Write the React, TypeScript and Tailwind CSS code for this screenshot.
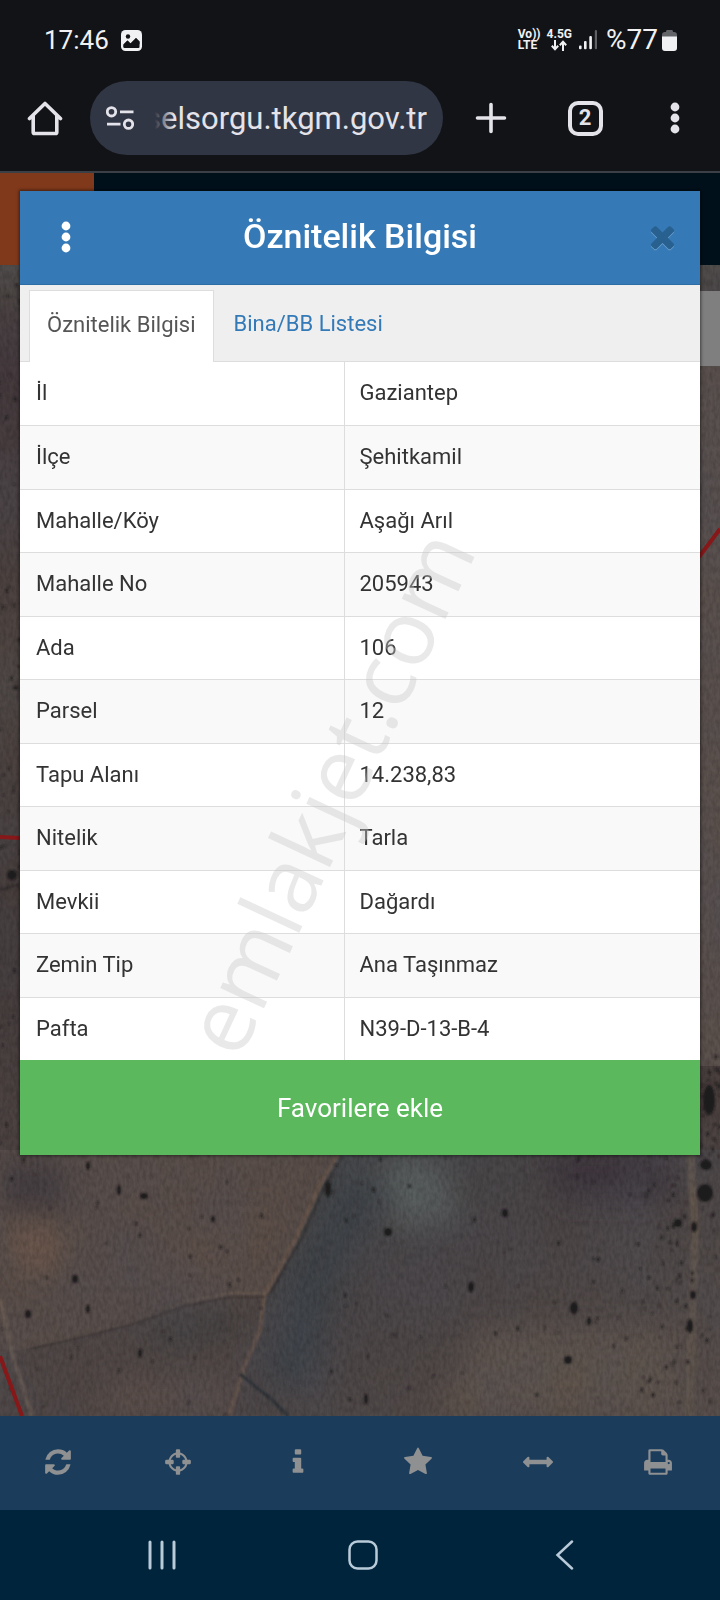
import React from 'react';

interface IconProps {
  path: string;
  className?: string;
}

const ICONS = {
  refresh:
    'M1639 1056q0 5-1 7-64 268-268 434.5t-478 166.5q-146 0-282.5-55t-243.5-157l-129 129q-19 19-45 19t-45-19-19-45v-448q0-26 19-45t45-19h448q26 0 45 19t19 45-19 45l-137 137q71 66 161 102t187 36q134 0 250-65t186-179q11-17 53-117 8-23 30-23h192q13 0 22.5 9.5t9.5 22.5zm25-800v448q0 26-19 45t-45 19h-448q-26 0-45-19t-19-45 19-45l138-138q-148-137-349-137-134 0-250 65t-186 179q-11 17-53 117-8 23-30 23h-199q-13 0-22.5-9.5t-9.5-22.5v-7q65-268 270-434.5t480-166.5q146 0 284 55.5t245 156.5l130-129q19-19 45-19t45 19 19 45z',
  crosshairs:
    'M1325 1024h-109q-26 0-45-19t-19-45v-128q0-26 19-45t45-19h109q-32-108-112.5-188.5t-188.5-112.5v109q0 26-19 45t-45 19h-128q-26 0-45-19t-19-45v-109q-108 32-188.5 112.5t-112.5 188.5h109q26 0 45 19t19 45v128q0 26-19 45t-45 19h-109q32 108 112.5 188.5t188.5 112.5v-109q0-26 19-45t45-19h128q26 0 45 19t19 45v109q108-32 188.5-112.5t112.5-188.5zm339-192v128q0 26-19 45t-45 19h-143q-37 161-154.5 278.5t-278.5 154.5v143q0 26-19 45t-45 19h-128q-26 0-45-19t-19-45v-143q-161-37-278.5-154.5t-154.5-278.5h-143q-26 0-45-19t-19-45v-128q0-26 19-45t45-19h143q37-161 154.5-278.5t278.5-154.5v-143q0-26 19-45t45-19h128q26 0 45 19t19 45v143q161 37 278.5 154.5t154.5 278.5h143q26 0 45 19t19 45z',
  info:
    'M1216 1344v128q0 26-19 45t-45 19h-512q-26 0-45-19t-19-45v-128q0-26 19-45t45-19h64v-384h-64q-26 0-45-19t-19-45v-128q0-26 19-45t45-19h384q26 0 45 19t19 45v576h64q26 0 45 19t19 45zm-128-1152v192q0 26-19 45t-45 19h-256q-26 0-45-19t-19-45v-192q0-26 19-45t45-19h256q26 0 45 19t19 45z',
  star:
    'M1728 647q0 22-26 48l-363 354 86 500q1 7 1 20 0 21-10.5 35.5t-30.5 14.5q-19 0-40-12l-449-236-449 236q-22 12-40 12-21 0-31.5-14.5t-10.5-35.5q0-6 2-20l86-500-364-354q-25-27-25-48 0-37 56-46l502-73 225-455q19-41 49-41t49 41l225 455 502 73q56 9 56 46z',
  arrows:
    'M1792 896q0 26-19 45l-256 256q-19 19-45 19t-45-19-19-45v-128h-1024v128q0 26-19 45t-45 19-45-19l-256-256q-19-19-19-45t19-45l256-256q19-19 45-19t45 19 19 45v128h1024v-128q0-26 19-45t45-19 45 19l256 256q19 19 19 45z',
  print:
    'M448 1536h896v-256h-896v256zm0-640h896v-384h-160q-40 0-68-28t-28-68v-160h-640v640zm1152 64q0-26-19-45t-45-19-45 19-19 45 19 45 45 19 45-19 19-45zm128 0v416q0 13-9.5 22.5t-22.5 9.5h-224v160q0 40-28 68t-68 28h-960q-40 0-68-28t-28-68v-160h-224q-13 0-22.5-9.5t-9.5-22.5v-416q0-79 56.5-135.5t135.5-56.5h64v-544q0-40 28-68t68-28h672q40 0 88 20t76 48l152 152q28 28 48 76t20 88v256h64q79 0 135.5 56.5t56.5 135.5z',
  times:
    'M1490 1322q0 40-28 68l-136 136q-28 28-68 28t-68-28l-294-294-294 294q-28 28-68 28t-68-28l-136-136q-28-28-28-68t28-68l294-294-294-294q-28-28-28-68t28-68l136-136q28-28 68-28t68 28l294 294 294-294q28-28 68-28t68 28l136 136q28 28 28 68t-28 68l-294 294 294 294q28 28 28 68z',
};

const Icon = ({ path, className = '' }: IconProps) => (
  <svg viewBox="0 0 1792 1792" fill="currentColor" className={className} aria-hidden="true">
    <path d={path} />
  </svg>
);

const Dots = ({ className = '' }: { className?: string }) => (
  <svg viewBox="0 0 10 32" fill="currentColor" className={className} aria-hidden="true">
    <circle cx="5" cy="5" r="4.4" />
    <circle cx="5" cy="16" r="4.4" />
    <circle cx="5" cy="27" r="4.4" />
  </svg>
);

const StatusBar = () => (
  <div className="flex h-20 items-center justify-between pl-11 pr-[43px] text-[#f1f1f3]">
    <div className="flex items-center gap-3">
      <span className="text-[26px] leading-8">17:46</span>
      <svg viewBox="0 0 21 21" className="size-[21px]" aria-hidden="true">
        <rect width="21" height="21" rx="4.5" fill="currentColor" />
        <circle cx="7" cy="6.5" r="2.2" fill="#121316" />
        <path d="M2.500 14.500 6.500 10.500l3 3 5.500-5.500 3.500 3.500v3l-3.500-3.500-5.500 6-3-3-4 3.500Z" fill="#121316" />
        <path d="M2.500 14.500 6.500 10.500l3 3 5.500-5.500 3.500 3.500V17q0 1-1 1h-14q-1 0-1-1Z" fill="#121316" />
      </svg>
    </div>
    <div className="flex items-center">
      <div className="text-[12px] font-bold leading-[11px]">
        <div>Vo))</div>
        <div>LTE</div>
      </div>
      <div className="ml-1.5 flex flex-col items-center text-[12px] font-bold leading-[11px]">
        <span>4.5G</span>
        <svg viewBox="0 0 16 11" className="h-[11px] w-4" fill="none" stroke="currentColor" strokeWidth="2" aria-hidden="true">
          <path d="M4 0v9M.8 5.800 4 9.200l3.200-3.400M12 11V2M8.800 5.200 12 1.800l3.200 3.400" />
        </svg>
      </div>
      <svg viewBox="0 0 20 20" className="ml-1.5 size-5" fill="currentColor" aria-hidden="true">
        <rect x="1" y="15.500" width="2.600" height="3.800" rx="1" />
        <rect x="6" y="11" width="2.600" height="8.300" rx="1" />
        <rect x="11.300" y="6" width="2.600" height="13.300" rx="1" />
        <rect x="16.800" y="0" width="2.200" height="19.300" rx="1" opacity=".35" />
      </svg>
      <span className="ml-2 text-[28px] leading-8">%77</span>
      <svg viewBox="0 0 15 21" className="ml-1 h-[21px] w-[15px]" aria-hidden="true">
        <path d="M5 0h5q1 0 1 2h1q3 0 3 3v2H0V5q0-3 3-3h1q0-2 1-2Z" fill="#636467" />
        <path d="M0 6.500h15V18q0 3-3 3H3q-3 0-3-3Z" fill="#f1f1f3" />
      </svg>
    </div>
  </div>
);

const BrowserBar = () => (
  <div className="flex h-[93px] items-start border-b-2 border-[#3b3f46] pt-px text-[#e4e3ea]">
    <button type="button" aria-label="Home" className="flex h-[74px] w-[90px] items-center justify-center">
      <svg viewBox="0 0 36 36" className="size-9" fill="none" stroke="currentColor" strokeWidth="3.600" strokeLinejoin="round" strokeLinecap="round" aria-hidden="true">
        <path d="M2.500 18.500 18 3.500l15.500 15M6.200 16v16.200q0 1.300 1.300 1.300h21q1.300 0 1.300-1.300V16" />
      </svg>
    </button>
    <div className="flex h-[74px] min-w-0 flex-1 items-center rounded-full bg-[#313645] pl-4 pr-4">
      <svg viewBox="0 0 28 24" className="h-6 w-7 shrink-0" fill="none" stroke="currentColor" strokeWidth="2.800" aria-hidden="true">
        <circle cx="5.500" cy="5.800" r="4.200" />
        <path d="M14 5.800h13.500M1 18.200h13.500" />
        <circle cx="22.500" cy="18.200" r="4.200" />
      </svg>
      <div className="relative ml-4 flex min-w-0 flex-1 justify-end overflow-hidden pt-0.5">
        <span className="whitespace-nowrap text-[31px] leading-10">selsorgu.tkgm.gov.tr</span>
        <div className="absolute inset-y-0 left-0 w-6 bg-linear-to-r from-[#313645] from-20% to-transparent" />
      </div>
    </div>
    <div className="flex h-[74px] w-[277px] items-center">
      <button type="button" aria-label="New tab" className="flex w-24 justify-center">
        <svg viewBox="0 0 32 32" className="size-8" stroke="currentColor" strokeWidth="3.600" strokeLinecap="round" aria-hidden="true">
          <path d="M16 2.500v27M2.500 16h27" />
        </svg>
      </button>
      <button type="button" aria-label="Tabs" className="flex w-[92px] justify-center">
        <span className="flex size-[35px] items-center justify-center rounded-[10px] border-4 border-[#e4e3ea] text-[22px] font-bold leading-6">
          2
        </span>
      </button>
      <button type="button" aria-label="Menu" className="flex w-[88px] justify-center">
        <Dots className="h-8 w-2.5" />
      </button>
    </div>
  </div>
);

// small repeatable generator so the shrubs always land on the same places
const shrubs = (count: number, seed: number, x: number, y: number, w: number, h: number) => {
  let s = seed;
  const next = () => {
    s = (s * 16807) % 2147483647;
    return s / 2147483647;
  };
  return Array.from({ length: count }, () => ({
    cx: x + next() * w,
    cy: y + next() * h,
    rx: 0.6 + next() * 1.2,
    ry: 0.8 + next() * 1.8,
  }));
};

const SHRUBS = [
  ...shrubs(40, 77, 0, 270, 20, 880),
  ...shrubs(24, 912, 0, 1156, 270, 180),
  ...shrubs(12, 431, 10, 1330, 230, 85),
  ...shrubs(60, 5501, 330, 1156, 350, 255),
  ...shrubs(65, 642, 640, 1150, 80, 266),
  ...shrubs(30, 99, 698, 1050, 22, 110),
];

const BIG_SHRUBS = [
  [88, 1166, 2, 4], [144, 1196, 4, 3], [119, 1190, 2, 5], [213, 1219, 2, 3],
  [75, 1279, 3, 4], [28, 1314, 3, 4], [88, 1309, 2, 4], [140, 1353, 2, 4],
  [328, 1189, 3, 8], [388, 1232, 4, 4], [505, 1213, 3, 4], [471, 1287, 3, 5],
  [574, 1308, 4, 6], [589, 1321, 2, 4], [568, 1360, 4, 4], [366, 1399, 2, 5],
  [690, 1326, 3, 7], [678, 1223, 4, 4], [705, 1193, 8, 9], [709, 1100, 6, 15],
  [706, 1165, 6, 5], [694, 1227, 3, 5], [693, 1295, 3, 4], [12, 875, 5, 5],
];

const MapCanvas = () => (
  <svg
    viewBox="0 265 720 1151"
    preserveAspectRatio="none"
    className="absolute inset-x-0 bottom-0 top-[92px] h-[calc(100%-92px)] w-full"
    aria-hidden="true"
  >
    <defs>
      <linearGradient id="soil" x1="0" y1="0" x2="0" y2="1">
        <stop offset="0" stopColor="#504c49" />
        <stop offset=".08" stopColor="#43373a" />
        <stop offset=".35" stopColor="#4f4642" />
        <stop offset=".6" stopColor="#443b3a" />
        <stop offset="1" stopColor="#584c48" />
      </linearGradient>
      <linearGradient id="east" x1="0" y1="0" x2="1" y2="1">
        <stop offset="0" stopColor="#454a4d" />
        <stop offset=".45" stopColor="#4b4546" />
        <stop offset="1" stopColor="#5a4f49" />
      </linearGradient>
      <filter id="blur" x="-50%" y="-50%" width="200%" height="200%">
        <feGaussianBlur stdDeviation="14" />
      </filter>
      <filter id="soft">
        <feGaussianBlur stdDeviation="1" />
      </filter>
      <filter id="patches" x="0" y="0" width="100%" height="100%">
        <feTurbulence type="fractalNoise" baseFrequency=".012 .009" numOctaves="5" seed="8" />
        <feColorMatrix values="0 0 0 0 .08  0 0 0 0 .08  0 0 0 0 .1  1.200 0 0 0 -.4" />
      </filter>
      <filter id="grain" x="0" y="0" width="100%" height="100%">
        <feTurbulence type="fractalNoise" baseFrequency=".3 .15" numOctaves="2" seed="3" />
        <feColorMatrix values="0 0 0 0 0  0 0 0 0 0  0 0 0 0 0  .6 0 0 0 -.2" />
      </filter>
    </defs>
    <rect y="265" width="720" height="1151" fill="url(#soil)" />
    <rect x="690" y="366" width="30" height="700" fill="#5b514d" />
    <path d="M0 1150h345l-20 32-25 55-35 62-35-2-45 9-55 19-60 15-70 14Z" fill="#5a4e49" />
    <path d="M0 1354l70-14 60-15 55-19 45-9h35l-3 33-17 40-13 46H0Z" fill="#504745" />
    <path d="M342 1150h378v266H232l13-46 17-40 3-33 35-62 25-55Z" fill="url(#east)" />
    <g filter="url(#blur)">
      <path d="M340 1180 285 1290l-20 90 50 10 20-110 60-100Z" fill="#3e4346" />
      <path d="M380 1160h60l20 60-60 10Z" fill="#5a5e5e" />
      <path d="M540 1150h130v50H560Z" fill="#3d363b" />
      <path d="M0 1160h60l10 50H0Z" fill="#443e40" />
      <path d="M5 1230h55v30l-30 15Z" fill="#6e594e" />
      <path d="M150 1240l120-30-15 60-60 20Z" fill="#5f4f47" />
      <path d="M150 1322l90-12v25l-90 10Z" fill="#434041" />
      <path d="M110 1380h120v36H90Z" fill="#5c504b" />
      <path d="M480 1330h200v86H440Z" fill="#60544e" />
    </g>
    <g fill="none" filter="url(#soft)">
      <path d="M338 1154l-18 30-24 54-32 58-4 34-17 40-14 46" stroke="#66554c" strokeWidth="4" />
      <path d="M343 1156l-17 28-24 54-32 56" stroke="#383334" strokeWidth="2" />
      <path d="M265 1297h-35l-45 9-55 19-60 15-40 9" stroke="#3f3836" strokeWidth="2" />
      <path d="M265 1293h-35l-47 9" stroke="#695a4f" strokeWidth="2" />
      <path d="M240 1374l30 24 18 18" stroke="#2b3036" strokeWidth="3" />
      <path d="M690 1150l5 80-6 186" stroke="#62564e" strokeWidth="8" />
      <path d="M0 1300l14 60 18 56" stroke="#6b5b53" strokeWidth="4" />
      <path d="M0 890l20-6" stroke="#2d2a2b" strokeWidth="2" />
    </g>
    <rect y="265" width="720" height="1151" filter="url(#patches)" opacity=".6" />
    <rect y="265" width="720" height="1151" filter="url(#grain)" opacity=".5" />
    <g fill="#1d1a1c" filter="url(#soft)">
      {SHRUBS.map((s, i) => (
        <ellipse key={i} {...s} opacity=".8" />
      ))}
      {BIG_SHRUBS.map(([cx, cy, rx, ry], i) => (
        <ellipse key={i} cx={cx} cy={cy} rx={rx} ry={ry} />
      ))}
    </g>
    <g fill="none" stroke="#86181a" strokeWidth="4">
      <path d="M0 1356l22 60" />
      <path d="M0 837l20 1" />
      <path d="M699 557l21-28" />
    </g>
  </svg>
);

const ROWS = [
  ['İl', 'Gaziantep'],
  ['İlçe', 'Şehitkamil'],
  ['Mahalle/Köy', 'Aşağı Arıl'],
  ['Mahalle No', '205943'],
  ['Ada', '106'],
  ['Parsel', '12'],
  ['Tapu Alanı', '14.238,83'],
  ['Nitelik', 'Tarla'],
  ['Mevkii', 'Dağardı'],
  ['Zemin Tip', 'Ana Taşınmaz'],
  ['Pafta', 'N39-D-13-B-4'],
];

const AttributeDialog = () => (
  <section
    role="dialog"
    aria-labelledby="dialog-title"
    className="relative mx-5 bg-white shadow-[0_0_3px_1px_rgba(0,0,0,0.5)]"
  >
    <header className="flex h-[94px] items-center justify-between border-b border-[#2e6da4] bg-[#357ab7] pb-0.5 text-white">
      <button type="button" aria-label="Menü" className="flex w-[91px] justify-center">
        <Dots className="h-8 w-2.5" />
      </button>
      <h1 id="dialog-title" className="pb-0.5 text-[34px] font-medium leading-10">
        Öznitelik Bilgisi
      </h1>
      <button type="button" aria-label="Kapat" className="flex w-[91px] justify-end pr-5">
        <Icon path={ICONS.times} className="size-[35px] text-[#28608f] drop-shadow-[0_1px_0_#6d9fcb]" />
      </button>
    </header>

    <nav className="flex h-[77px] items-end border-b border-[#ddd] bg-[#efefef] pl-[9px] text-[22px] leading-8">
      <a href="#oznitelik" className="-mb-px flex h-[72px] items-center border border-b-0 border-[#ddd] bg-white px-[17px] pb-1 text-[#555]">
        Öznitelik Bilgisi
      </a>
      <a href="#bina" className="flex h-[71px] items-center px-5 pb-1 text-[#337ab7]">
        Bina/BB Listesi
      </a>
    </nav>

    <table className="w-full table-fixed border-collapse text-left text-[22px] leading-8 text-[#333]">
      <tbody>
        {ROWS.map(([label, value]) => (
          <tr key={label} className="border-b border-[#ddd] last:border-b-0 odd:h-[63px] even:h-16 even:bg-[#f9f9f9]">
            <th scope="row" className="w-[324px] border-r border-[#ddd] py-0 pl-4 font-normal">
              {label}
            </th>
            <td className="py-0 pl-[15px]">{value}</td>
          </tr>
        ))}
      </tbody>
    </table>

    <button type="button" className="block h-[95px] w-full bg-[#5cb85c] text-[26px] leading-8 text-white">
      Favorilere ekle
    </button>

    <div className="pointer-events-none absolute inset-x-0 bottom-0 top-[236px] flex items-center justify-center pr-[66px]">
      <span className="-rotate-65 whitespace-nowrap font-['Open_Sans','Noto_Sans',sans-serif] text-[90px] leading-none text-[#c8c8c8]/40">
        emlakjet.com
      </span>
    </div>
  </section>
);

const TOOLS = [
  { label: 'Yenile', path: ICONS.refresh },
  { label: 'Konum', path: ICONS.crosshairs },
  { label: 'Bilgi', path: ICONS.info },
  { label: 'Favoriler', path: ICONS.star },
  { label: 'Ölçüm', path: ICONS.arrows },
  { label: 'Yazdır', path: ICONS.print },
];

const ToolBar = () => (
  <div className="grid h-[94px] grid-cols-6 bg-[#1b3d5b] text-[#8f9092]">
    {TOOLS.map(({ label, path }) => (
      <button key={label} type="button" aria-label={label} className="flex items-center justify-center pb-0.5 pr-1">
        <Icon path={path} className="size-[30px]" />
      </button>
    ))}
  </div>
);

const SystemNav = () => (
  <div className="grid h-[90px] grid-cols-3 bg-[#00243b] pl-[61px] pr-14 text-[#b9cad9]">
    <button type="button" aria-label="Recents" className="flex items-center justify-center">
      <svg viewBox="0 0 30 30" className="size-[30px]" stroke="currentColor" strokeWidth="3" strokeLinecap="round" aria-hidden="true">
        <path d="M3 2v26M15 2v26M27 2v26" />
      </svg>
    </button>
    <button type="button" aria-label="Home" className="flex items-center justify-center">
      <svg viewBox="0 0 30 30" className="size-[30px]" fill="none" stroke="currentColor" strokeWidth="2.500" aria-hidden="true">
        <rect x="1.500" y="1.500" width="27" height="27" rx="8" />
      </svg>
    </button>
    <button type="button" aria-label="Back" className="flex items-center justify-center">
      <svg viewBox="0 0 30 30" className="size-[30px]" fill="none" stroke="currentColor" strokeWidth="2.500" strokeLinecap="round" aria-hidden="true">
        <path d="M23 1.500 8.500 15 23 28.500" />
      </svg>
    </button>
  </div>
);

export default function App() {
  return (
    <div className="flex min-h-screen flex-col bg-[#121316] font-['Roboto',sans-serif]">
      <StatusBar />
      <BrowserBar />
      <main className="relative flex-1 overflow-hidden pb-[261px] pt-[18px]">
        <MapCanvas />
        <div className="absolute inset-x-0 top-0 flex h-[92px] bg-[#00101b]">
          <div className="w-[94px] bg-[#81391b]" />
        </div>
        <div className="absolute right-0 top-[118px] h-[75px] w-10 bg-[#7f7f7f]" />
        <AttributeDialog />
      </main>
      <ToolBar />
      <SystemNav />
    </div>
  );
}
